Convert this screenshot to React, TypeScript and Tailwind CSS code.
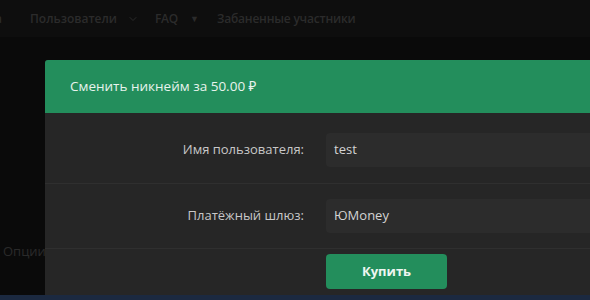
import { ChevronDown } from 'lucide-react';

export default function App() {
  return (
    <div
      className="relative w-[590px] h-[300px] overflow-hidden bg-[#0a0a0a] text-[13px]"
      style={{ fontFamily: '"Open Sans", "Noto Sans", sans-serif' }}
    >
      {/* Page under the overlay */}
      <div className="h-[37px] bg-[#0e0e0e] flex items-center text-[12px] text-[#2b2b2b] font-semibold">
        <span className="-ml-[5px] mr-[28px]">а</span>
        <span>Пользователи</span>
        <ChevronDown className="w-[12px] h-[12px] ml-[10px] mr-[16px]" strokeWidth={2} />
        <span className="tracking-[-0.2px]">FAQ</span>
        <span className="text-[9px] ml-[12px] mr-[18px]">▼</span>
        <span className="tracking-[-0.2px]">Забаненные участники</span>
      </div>
      <div className="pt-[205px] pl-[3px] text-[#2a2a2a]">Опции</div>
      <div className="absolute left-0 right-0 bottom-0 h-[5px] bg-[#1b2940]" />

      {/* Modal */}
      <div className="absolute left-[45px] top-[60px] w-[600px] h-[235px] bg-[#262626] rounded-tl-[3px] overflow-hidden">
        <div className="h-[53px] bg-[#238e5c] flex items-center pl-[25px] text-[13.5px] text-[#e8f3ed]">
          Сменить никнейм за 50.00 ₽
        </div>
        <div className="grid grid-cols-[259px_1fr] gap-x-[22px]">
          <div className="pt-[20px] pb-[16px] flex items-center justify-end text-[#c8c8c8] border-b border-[#2f2f2f]">
            Имя пользователя:
          </div>
          <div className="pt-[20px] pb-[16px] border-b border-[#2f2f2f] -ml-[22px] pl-[22px]">
            <div className="h-[34px] bg-[#2c2c2c] rounded-l-[4px] flex items-center pl-[8px] text-[#d4d4d4]">
              test
            </div>
          </div>
          <div className="pt-[15px] pb-[15px] flex items-center justify-end text-[#c8c8c8] border-b border-[#2f2f2f]">
            Платёжный шлюз:
          </div>
          <div className="pt-[15px] pb-[15px] border-b border-[#2f2f2f] -ml-[22px] pl-[22px]">
            <div className="h-[34px] bg-[#2c2c2c] rounded-l-[4px] flex items-center pl-[8px] text-[#d4d4d4]">
              ЮMoney
            </div>
          </div>
          <div />
          <div className="pt-[5px]">
            <button className="w-[121px] h-[35px] bg-[#238e5c] rounded-[4px] text-[#eef6f1] font-bold">
              Купить
            </button>
          </div>
        </div>
      </div>
    </div>
  );
}
